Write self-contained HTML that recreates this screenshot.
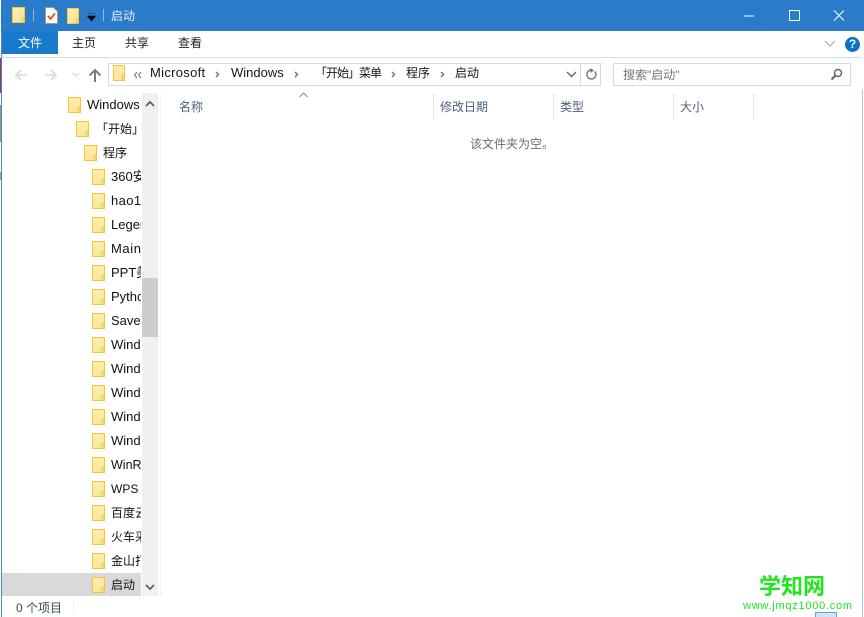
<!DOCTYPE html>
<html lang="zh">
<head>
<meta charset="utf-8">
<title>启动</title>
<style>
html,body{margin:0;padding:0;background:#fff}
body{width:864px;height:617px;position:relative;overflow:hidden;font-family:"Liberation Sans","Noto Sans CJK SC",sans-serif;font-size:12px;color:#1a1a1a}
.a{position:absolute}
.t{position:absolute;white-space:nowrap;line-height:16px;height:16px}
.f{position:absolute;width:11px;height:14px;background:linear-gradient(135deg,#ffeeb0,#fde28c);border:1px solid #eec643;box-sizing:content-box}
.f:after{content:"";position:absolute;right:-1px;bottom:-1px;width:3px;height:6px;border:1px solid #eec643;background:#fbe08a;box-sizing:border-box}
.tree{position:absolute;left:2px;top:93px;width:139px;height:503px;overflow:hidden}
.tree .t{color:#111;font-size:13px;margin-top:1px}
.tree .c{font-size:12px}
.hdr{position:absolute;top:93px;width:1px;height:27px;background:#e5e5e5}
.h{position:absolute;top:99px;color:#4c607a;line-height:16px;white-space:nowrap}
.crumb{position:absolute;top:65px;line-height:16px;color:#151515;white-space:nowrap;font-size:13px}
</style>
</head>
<body>
<div class="a" style="left:1px;top:0;width:863px;height:31px;background:#2a7bc9"></div>
<div class="a" style="left:2px;top:31px;width:56px;height:23px;background:#1979ca"></div>
<div class="a" style="left:1px;top:31px;width:1px;height:586px;background:#4a8ac6"></div>
<div class="a" style="left:0;top:58px;width:1px;height:35px;background:#b03040"></div>
<div class="a" style="left:0;top:105px;width:1px;height:37px;background:#8a9c70"></div>
<div class="a" style="left:0;top:172px;width:1px;height:8px;background:#b8a070"></div>
<div class="a" style="left:862px;top:90px;width:1px;height:527px;background:#a9c9e8"></div>

<div class="f" style="left:12px;top:7px;width:11px;height:14px;border-color:#f5c842"></div>
<div class="a" style="left:33px;top:9px;width:1px;height:12px;background:#8fb8df"></div>
<svg class="a" style="left:45px;top:7px" width="13" height="17" viewBox="0 0 13 17"><path d="M.5.5h8l4 4v12H.5z" fill="#fafafa" stroke="#9a9a9a"/><path d="M3 9l2.500 3L10 6.500" fill="none" stroke="#e8501c" stroke-width="1.800"/></svg>
<div class="f" style="left:67px;top:8px;width:10px;height:14px;border-color:#f5c842"></div>
<svg class="a" style="left:87px;top:13px" width="10" height="9" viewBox="0 0 10 9"><path d="M1 0h7M.500 3h8L4.500 8z" fill="#000" stroke="#000" stroke-width=".6"/></svg>
<div class="a" style="left:103px;top:9px;width:1px;height:12px;background:#8fb8df"></div>
<div class="t" style="left:111px;top:8px;color:#e6effa;font-size:12px">启动</div>

<svg class="a" style="left:744px;top:8px" width="100" height="16" viewBox="0 0 100 16"><path d="M0 8h10" stroke="#fff" fill="none"/><rect x="45.500" y="2.500" width="10" height="10" fill="none" stroke="#fff"/><path d="M90 2.500l10 10M100 2.500l-10 10" stroke="#fff" fill="none"/></svg>

<div class="t" style="left:18px;top:35px;color:#fff">文件</div>
<div class="t" style="left:72px;top:35px;color:#222">主页</div>
<div class="t" style="left:125px;top:35px;color:#222">共享</div>
<div class="t" style="left:178px;top:35px;color:#222">查看</div>
<svg class="a" style="left:824px;top:40px" width="12" height="8" viewBox="0 0 12 8"><path d="M1 1l5 5 5-5" fill="none" stroke="#a8a8a8" stroke-width="1.100"/></svg>
<div class="a" style="left:845px;top:37px;width:15px;height:15px;border-radius:50%;background:#0e70c8;color:#fff;font:bold 12px/15px 'Liberation Sans',sans-serif;text-align:center">?</div>
<div class="a" style="left:2px;top:57px;width:860px;height:1px;background:#dadbdc"></div>

<svg class="a" style="left:14px;top:67px" width="100" height="16" viewBox="0 0 100 16"><path d="M13 8H2M7 3L2 8l5 5" fill="none" stroke="#dcdcdc" stroke-width="1.800"/><path d="M31 8h11M37 3l5 5-5 5" fill="none" stroke="#dcdcdc" stroke-width="1.800"/><path d="M58 6l3.500 3L65 6" fill="none" stroke="#dcdcdc" stroke-width="1.200"/><path d="M81 15V3M75.500 8.500L81 3l5.500 5.500" fill="none" stroke="#7d7d7d" stroke-width="2"/></svg>

<div class="a" style="left:108px;top:63px;width:493px;height:23px;border:1px solid #d9d9d9;box-sizing:border-box"></div>
<div class="a" style="left:580px;top:63px;width:1px;height:23px;background:#d9d9d9"></div>
<div class="f" style="left:113px;top:65px;width:10px;height:14px"></div>
<svg class="a" style="left:133px;top:71px" width="9" height="8" viewBox="0 0 9 8"><path d="M4 1L1.500 4 4 7M8 1L5.500 4 8 7" fill="none" stroke="#777" stroke-width="1.100"/></svg>
<div class="crumb" style="left:150px;letter-spacing:.3px">Microsoft</div>
<div class="crumb" style="left:231px">Windows</div>
<div class="crumb" style="left:315px;font-size:12px;letter-spacing:-1px">「开始」菜单</div>
<div class="crumb" style="left:406px;font-size:12px">程序</div>
<div class="crumb" style="left:455px;font-size:12px">启动</div>
<svg class="a" style="left:215px;top:70px" width="240" height="9" viewBox="0 0 240 9"><g fill="none" stroke="#777" stroke-width="1.500"><path d="M1 2l2.500 2.500L1 7"/><path d="M80 2l2.500 2.500L80 7"/><path d="M177 2l2.500 2.500L177 7"/><path d="M226 2l2.500 2.500L226 7"/></g></svg>
<svg class="a" style="left:566px;top:71px" width="11" height="8" viewBox="0 0 11 8"><path d="M1 1l4.500 4.500L10 1" fill="none" stroke="#666" stroke-width="1.400"/></svg>
<svg class="a" style="left:585px;top:68px" width="13" height="13" viewBox="0 0 13 13"><path d="M9.800 3.500A4.500 4.500 0 1 1 6 2" fill="none" stroke="#777" stroke-width="1.400"/><path d="M5.500 0v5L9 2.500z" fill="#777"/></svg>

<div class="a" style="left:613px;top:63px;width:238px;height:23px;border:1px solid #d9d9d9;box-sizing:border-box"></div>
<div class="t" style="left:623px;top:67px;color:#757575">搜索"启动"</div>
<svg class="a" style="left:830px;top:68px" width="13" height="13" viewBox="0 0 13 13"><circle cx="8" cy="5" r="3.500" fill="none" stroke="#666" stroke-width="1.500"/><path d="M5.500 7.500L1.500 11.500" stroke="#666" stroke-width="2"/></svg>

<div class="tree">
<div class="a" style="left:0;top:480px;width:140px;height:23px;background:#d9d9d9"></div>
<div class="f" style="left:66px;top:4px"></div><div class="t" style="left:85px;top:3px">Windows</div>
<div class="f" style="left:74px;top:28px"></div><div class="t c" style="left:94px;top:27px">「开始」</div>
<div class="f" style="left:82px;top:52px"></div><div class="t c" style="left:101px;top:51px">程序</div>
<div class="f" style="left:90px;top:76px"></div><div class="t" style="left:109px;top:75px">360安全</div>
<div class="f" style="left:90px;top:100px"></div><div class="t" style="left:109px;top:99px;letter-spacing:.4px">hao1.</div>
<div class="f" style="left:90px;top:124px"></div><div class="t" style="left:109px;top:123px">Legen</div>
<div class="f" style="left:90px;top:148px"></div><div class="t" style="left:109px;top:147px;letter-spacing:.6px">Main</div>
<div class="f" style="left:90px;top:172px"></div><div class="t" style="left:109px;top:171px">PPT美化</div>
<div class="f" style="left:90px;top:196px"></div><div class="t" style="left:109px;top:195px">Pytho</div>
<div class="f" style="left:90px;top:220px"></div><div class="t" style="left:109px;top:219px">SaveV</div>
<div class="f" style="left:90px;top:244px"></div><div class="t" style="left:109px;top:243px">Wind</div>
<div class="f" style="left:90px;top:268px"></div><div class="t" style="left:109px;top:267px">Wind</div>
<div class="f" style="left:90px;top:292px"></div><div class="t" style="left:109px;top:291px">Wind</div>
<div class="f" style="left:90px;top:316px"></div><div class="t" style="left:109px;top:315px">Wind</div>
<div class="f" style="left:90px;top:340px"></div><div class="t" style="left:109px;top:339px">Wind</div>
<div class="f" style="left:90px;top:364px"></div><div class="t" style="left:109px;top:363px;font-size:12.500px">WinR</div>
<div class="f" style="left:90px;top:388px"></div><div class="t c" style="left:109px;top:387px;font-size:12px">WPS</div>
<div class="f" style="left:90px;top:412px"></div><div class="t c" style="left:109px;top:411px;font-size:12px">百度云盘</div>
<div class="f" style="left:90px;top:436px"></div><div class="t c" style="left:109px;top:435px;font-size:12px">火车采集</div>
<div class="f" style="left:90px;top:460px"></div><div class="t c" style="left:109px;top:459px;font-size:12px">金山打字</div>
<div class="f" style="left:90px;top:484px"></div><div class="t c" style="left:109px;top:483px;font-size:12px">启动</div>
</div>

<div class="a" style="left:142px;top:93px;width:16px;height:503px;background:#f0f0f0"></div>
<div class="a" style="left:142px;top:278px;width:16px;height:59px;background:#cdcdcd"></div>
<svg class="a" style="left:145px;top:100px" width="10" height="7" viewBox="0 0 10 7"><path d="M1 6l4-4 4 4" fill="none" stroke="#606060" stroke-width="1.800"/></svg>
<svg class="a" style="left:145px;top:584px" width="10" height="7" viewBox="0 0 10 7"><path d="M1 1l4 4 4-4" fill="none" stroke="#606060" stroke-width="1.800"/></svg>
<div class="a" style="left:160px;top:93px;width:1px;height:503px;background:#f0f0f0"></div>

<svg class="a" style="left:299px;top:92px" width="9" height="6" viewBox="0 0 9 6"><path d="M.5 5L4.500 1l4 4" fill="none" stroke="#8a8a8a"/></svg>
<div class="h" style="left:179px">名称</div>
<div class="hdr" style="left:433px"></div>
<div class="h" style="left:440px">修改日期</div>
<div class="hdr" style="left:553px"></div>
<div class="h" style="left:560px">类型</div>
<div class="hdr" style="left:673px"></div>
<div class="h" style="left:680px">大小</div>
<div class="hdr" style="left:753px"></div>
<div class="t" style="left:470px;top:136px;color:#6d6d6d">该文件夹为空。</div>

<div class="t" style="left:16px;top:600px;color:#3b4a5c">0 个项目</div>
<div class="a" style="left:73px;top:600px;width:1px;height:14px;background:#efefef"></div>
<div class="a" style="left:815px;top:612px;width:22px;height:5px;background:#cfe6f6;border:1px solid #5aa5dc;border-bottom:0;box-sizing:border-box"></div>

<div class="t" style="left:759px;top:572px;height:26px;line-height:26px;font-size:22px;font-weight:bold;color:#1fe51f;font-family:'Noto Sans CJK SC',sans-serif">学知网</div>
<div class="t" style="left:743px;top:600px;height:12px;line-height:12px;font-size:11px;letter-spacing:.75px;color:#1fe51f;font-family:'Liberation Sans',sans-serif;white-space:nowrap">www.jmqz1000.com</div>
</body>
</html>
